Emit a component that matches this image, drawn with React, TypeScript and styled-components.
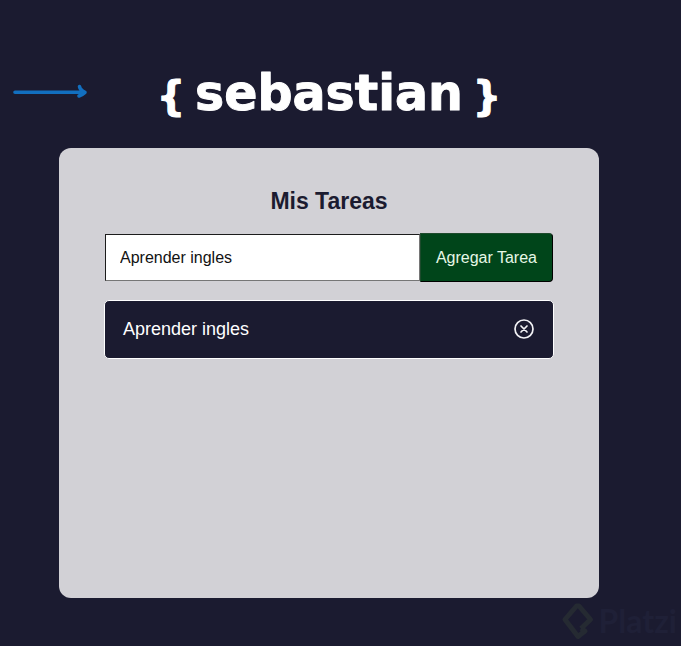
import React, { FormEvent, useState } from "react";
import styled, { createGlobalStyle } from "styled-components";

const GlobalStyle = createGlobalStyle`
  *, *::before, *::after { box-sizing: border-box; }
  body {
    margin: 0;
    background: #1b1b30;
    font-family: "Liberation Sans", Arial, sans-serif;
  }
`;

const Page = styled.div`
  position: relative;
  display: flex;
  flex-direction: column;
  align-items: center;
  min-height: 100vh;
  padding: 52px 82px 48px 59px;
`;

const Logo = styled.svg`
  display: block;
  width: 340px;
  height: 80px;
  margin-bottom: 16px;
  overflow: visible;
  fill: #fff;
  stroke: #fff;
  stroke-linejoin: round;
  font-family: "DejaVu Sans", sans-serif;
  font-weight: bold;
`;

const Arrow = styled.svg`
  position: absolute;
  top: 82px;
  left: 11px;
  width: 80px;
  height: 20px;
  fill: none;
  stroke: #126fbf;
  stroke-width: 3.6;
  stroke-linecap: round;
  stroke-linejoin: round;
`;

const Card = styled.main`
  width: 100%;
  max-width: 540px;
  min-height: 450px;
  padding: 40px 45px;
  border-radius: 12px;
  background: #d2d1d6;
`;

const Title = styled.h1`
  margin: 0 0 19px;
  color: #1b1b30;
  font-size: 23px;
  line-height: 26px;
  text-align: center;
`;

const TaskForm = styled.form`
  display: flex;
  align-items: center;
  padding: 0 1px;
  margin-bottom: 18px;
`;

const TaskInput = styled.input`
  flex: 1;
  min-width: 0;
  height: 47px;
  padding: 0 14px;
  border: 1px solid #1c1c1c;
  border-right-color: #767676;
  border-bottom-color: #767676;
  border-radius: 0;
  outline: none;
  background: #fff;
  color: #111;
  font: 16px "Liberation Sans", Arial, sans-serif;
`;

const AddButton = styled.button`
  height: 49px;
  padding: 0 15px;
  border: 1px solid #000;
  border-top-color: #1d4a2c;
  border-left-color: #1d4a2c;
  border-radius: 0 4px 4px 0;
  background: #00451a;
  color: #e6f8e6;
  font: 16px "Liberation Sans", Arial, sans-serif;
  white-space: nowrap;
`;

const TaskList = styled.ul`
  display: grid;
  gap: 12px;
  margin: 0;
  padding: 0;
  list-style: none;
`;

const TaskItem = styled.li`
  display: flex;
  align-items: center;
  justify-content: space-between;
  min-height: 59px;
  padding: 0 18px 2px;
  border: 1px solid #fff;
  border-radius: 5px;
  background: #1b1b30;
  color: #fff;
  font-size: 18px;
  line-height: 24px;
`;

const RemoveButton = styled.button`
  display: flex;
  padding: 0;
  border: 0;
  background: none;
  color: #f2f2f5;
`;

const Watermark = styled.div`
  position: absolute;
  right: 4px;
  bottom: 5px;
  display: flex;
  align-items: center;
  gap: 4px;
  color: #1f2037;
  font: bold 32px/40px Lato, sans-serif;
`;

export default function App() {
  const [draft, setDraft] = useState("Aprender ingles");
  const [tasks, setTasks] = useState(["Aprender ingles"]);

  const addTask = (event: FormEvent) => {
    event.preventDefault();
    if (draft.trim()) setTasks([...tasks, draft.trim()]);
  };

  return (
    <>
      <GlobalStyle />
      <Page>
        <Arrow viewBox="0 0 80 20" aria-hidden="true">
          <path d="M4 10.3H73M68.5 4.5Q69 8 74 10.3Q71 13 68 14" />
        </Arrow>
        <Logo viewBox="0 0 340 80" role="img" aria-label="{sebastian}">
          <text x="12" y="58" fontSize="40" textAnchor="middle">{"{"}</text>
          <text x="170" y="58" fontSize="49" strokeWidth="1" textAnchor="middle">sebastian</text>
          <text x="328" y="58" fontSize="40" textAnchor="middle">{"}"}</text>
        </Logo>
        <Card>
          <Title>Mis Tareas</Title>
          <TaskForm onSubmit={addTask}>
            <TaskInput
              type="text"
              aria-label="Tarea"
              value={draft}
              onChange={(event) => setDraft(event.target.value)}
            />
            <AddButton type="submit">Agregar Tarea</AddButton>
          </TaskForm>
          <TaskList>
            {tasks.map((task, index) => (
              <TaskItem key={index}>
                {task}
                <RemoveButton
                  type="button"
                  aria-label={`Eliminar ${task}`}
                  onClick={() => setTasks(tasks.filter((_, i) => i !== index))}
                >
                  <svg width="22" height="22" viewBox="0 0 22 22" fill="none" stroke="currentColor" strokeWidth="1.7" strokeLinecap="round">
                    <circle cx="11" cy="11" r="9" />
                    <path d="M8 8L14 14M14 8L8 14" />
                  </svg>
                </RemoveButton>
              </TaskItem>
            ))}
          </TaskList>
        </Card>
        <Watermark>
          <svg width="34" height="40" viewBox="0 0 34 40" fill="none" stroke="#252a32" strokeWidth="5" strokeLinejoin="round" aria-hidden="true">
            <path d="M20 27.5L29.5 18.5L18 5H15.5L4 18.5L17 35.5L24 30L20 27.5" />
          </svg>
          Platzi
        </Watermark>
      </Page>
    </>
  );
}
